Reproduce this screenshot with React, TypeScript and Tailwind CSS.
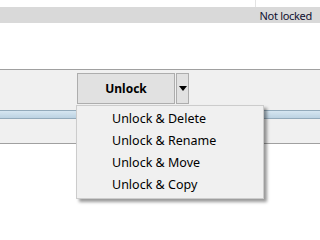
const items = ['Unlock & Delete', 'Unlock & Rename', 'Unlock & Move', 'Unlock & Copy'];

export default function App() {
  return (
    <div className="relative w-[320px] h-[240px] overflow-hidden bg-white text-black font-['Noto_Sans','Open_Sans',sans-serif] text-[12px]">
      <div className="h-[7px] w-[256px] border-r border-[#e3e3e3]" />
      <div className="h-[16px] bg-[#d9d9d9] flex items-center justify-end pr-[8px] leading-none text-[11px] tracking-[-0.3px] text-[#101030]">
        Not locked
      </div>
      <div className="h-[46px]" />
      <div className="h-[75px] bg-[#f0f0f0] border-t border-b border-[#a0a0a0] flex flex-col">
        <div className="flex pt-[3px] pl-[77px] gap-[1px]">
          <div className="w-[98px] h-[31px] bg-[#e1e1e1] border border-[#adadad] flex items-center justify-center font-bold">
            Unlock
          </div>
          <div className="w-[13px] h-[31px] bg-[#e1e1e1] border border-[#adadad] flex items-center justify-center">
            <svg width="8" height="5" viewBox="0 0 8 5">
              <path d="M0 0h8L4 5z" fill="#000" />
            </svg>
          </div>
        </div>
        <div className="mt-[6px] h-[9px] border-y border-[#93aabb] bg-gradient-to-b from-[#d6e6f1] to-[#bcd2e2]" />
      </div>
      <div className="absolute left-[76px] top-[105px] w-[188px] h-[94px] bg-[#f0f0f0] border border-[#cccccc] shadow-[3px_3px_3px_rgba(0,0,0,0.4)] py-[2px]">
        {items.map((t) => (
          <div key={t} className="h-[22px] flex items-center pl-[35px] text-[12.5px]">
            {t}
          </div>
        ))}
      </div>
    </div>
  );
}
